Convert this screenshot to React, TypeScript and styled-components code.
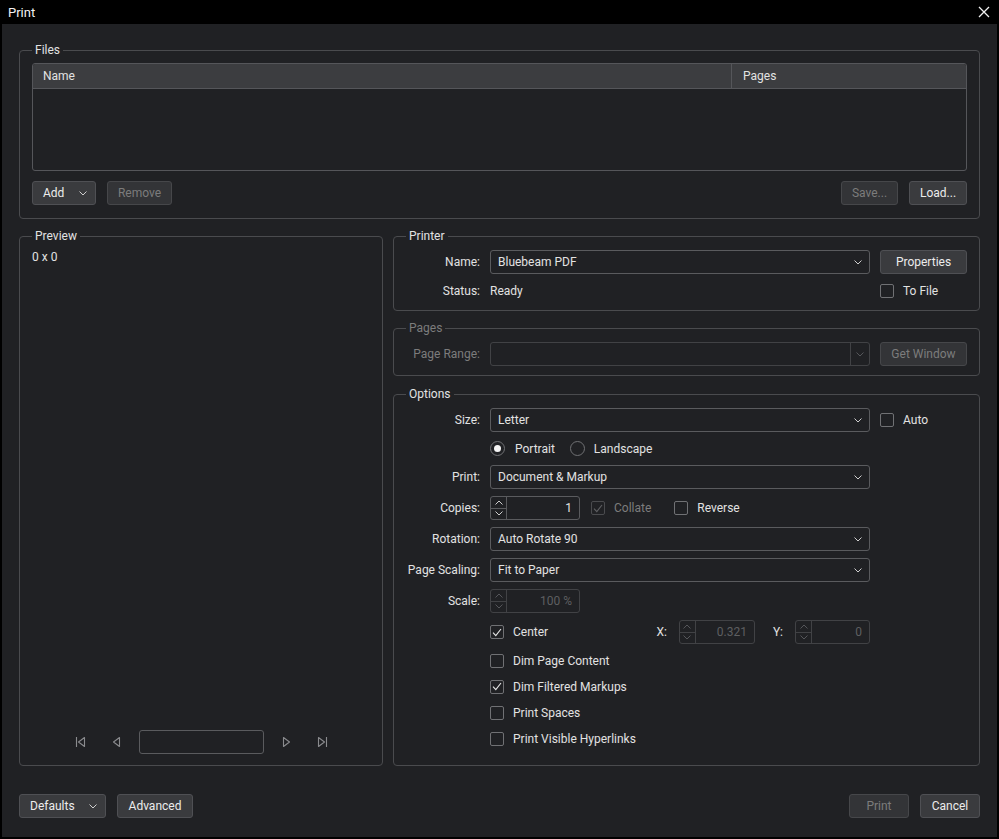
import React from 'react';
import styled, { createGlobalStyle } from 'styled-components';

const C = {
    bg: '#202124',
    frame: '#4a4b4e',
    field: '#5a5b5e',
    fieldOff: '#414245',
    btn: '#3a3b3e',
    btnBorder: '#4f5054',
    btnOff: '#333437',
    text: '#e2e2e2',
    textOff: '#7c7c7c',
    textDim: '#5e5f61',
};

const GlobalStyle = createGlobalStyle`
    html, body {
        margin: 0;
        padding: 0;
        background: #000;
    }
    body {
        font-family: Roboto, 'Liberation Sans', sans-serif;
        font-size: 12px;
        color: ${C.text};
    }
`;

const Chevron: React.FC<{ color?: string; up?: boolean }> = ({ color = '#cfcfcf', up }) => (
    <svg width="8" height="5" viewBox="0 0 8 5">
        <path d={up ? 'M0.5 4.5 L4 1 L7.5 4.5' : 'M0.5 0.5 L4 4 L7.5 0.5'} fill="none" stroke={color} strokeWidth="1" />
    </svg>
);

const Check: React.FC<{ color?: string }> = ({ color = '#e6e6e6' }) => (
    <svg width="10" height="9" viewBox="0 0 10 9">
        <path d="M1 4.6 L3.8 7.6 L9 1" fill="none" stroke={color} strokeWidth="1.1" />
    </svg>
);

const NavIcon: React.FC<{ kind: 'first' | 'prev' | 'next' | 'last' }> = ({ kind }) => {
    const left = kind === 'first' || kind === 'prev';
    const bar = kind === 'first' || kind === 'last';
    return (
        <svg width="12" height="12" viewBox="0 0 12 12">
            {left ? (
                <path d="M9.5 1.5 L3.5 6 L9.5 10.5 Z" fill="none" stroke="#8a8b8e" strokeWidth="1.1" strokeLinejoin="round" />
            ) : (
                <path d="M2.5 1.5 L8.5 6 L2.5 10.5 Z" fill="none" stroke="#8a8b8e" strokeWidth="1.1" strokeLinejoin="round" />
            )}
            {bar && <path d={left ? 'M1.5 1 V11' : 'M10.5 1 V11'} stroke="#8a8b8e" strokeWidth="1.1" />}
        </svg>
    );
};

const Window = styled.div`
    width: 999px;
    height: 839px;
    box-sizing: border-box;
    background: #000;
    padding: 0 2px 2px;
    display: flex;
    flex-direction: column;
`;

const TitleBar = styled.div`
    height: 24px;
    flex-shrink: 0;
    display: flex;
    align-items: center;
    justify-content: space-between;
    padding: 0 6px 0 6px;
    color: #f2f2f2;
    font-size: 13px;
`;

const CloseButton = styled.div`
    width: 14px;
    height: 14px;
    display: flex;
    align-items: center;
    justify-content: center;
`;

const Body = styled.div`
    flex: 1;
    min-height: 0;
    background: ${C.bg};
    padding: 19px 17px 19px 17px;
    display: flex;
    flex-direction: column;
`;

const Group = styled.fieldset<{ $pt?: number; $pb?: number }>`
    margin: 0;
    min-width: 0;
    border: 1px solid ${C.frame};
    border-radius: 4px;
    padding: ${(p) => p.$pt ?? 7}px 12px ${(p) => p.$pb ?? 11}px;
    display: flex;
    flex-direction: column;
`;

const Legend = styled.legend<{ $off?: boolean }>`
    padding: 0 3px;
    line-height: 14px;
    font-size: 12px;
    color: ${(p) => (p.$off ? C.textOff : C.text)};
`;

const Table = styled.div`
    height: 108px;
    box-sizing: border-box;
    border: 1px solid #55565a;
    border-radius: 3px;
    overflow: hidden;
`;

const TableHead = styled.div`
    height: 25px;
    box-sizing: border-box;
    display: grid;
    grid-template-columns: 698px 1fr;
    background: #3c3d40;
    border-bottom: 1px solid #55565a;
`;

const HeadCell = styled.div<{ $divider?: boolean }>`
    display: flex;
    align-items: center;
    padding-left: ${(p) => (p.$divider ? 11 : 10)}px;
    border-left: ${(p) => (p.$divider ? '1px solid #55565a' : 'none')};
    color: ${C.text};
`;

const ButtonRow = styled.div`
    display: flex;
    justify-content: space-between;
    align-items: center;
    margin-top: 10px;
`;

const ButtonGroup = styled.div`
    display: flex;
    gap: 11px;
`;

const Button = styled.div<{ $w: number; $off?: boolean; $menu?: boolean }>`
    width: ${(p) => p.$w}px;
    height: 24px;
    box-sizing: border-box;
    display: flex;
    align-items: center;
    justify-content: ${(p) => (p.$menu ? 'space-between' : 'center')};
    padding: ${(p) => (p.$menu ? '0 8px 0 10px' : '0')};
    background: ${(p) => (p.$off ? C.btnOff : C.btn)};
    border: 1px solid ${(p) => (p.$off ? '#46474a' : C.btnBorder)};
    border-radius: 3px;
    color: ${(p) => (p.$off ? C.textOff : '#ececec')};
    flex-shrink: 0;
`;

const Middle = styled.div`
    flex: 1;
    min-height: 0;
    display: flex;
    gap: 10px;
    margin-top: 10px;
`;

const PreviewGroup = styled(Group)`
    width: 364px;
    box-sizing: border-box;
    flex-shrink: 0;
`;

const PreviewText = styled.div`
    line-height: 14px;
`;

const Spacer = styled.div`
    flex: 1;
`;

const Nav = styled.div`
    display: flex;
    justify-content: center;
    align-items: center;
    gap: 11px;
`;

const NavButton = styled.div`
    width: 24px;
    height: 24px;
    display: flex;
    align-items: center;
    justify-content: center;
`;

const PageInput = styled.div`
    width: 125px;
    height: 24px;
    box-sizing: border-box;
    border: 1px solid ${C.field};
    border-radius: 3px;
`;

const RightColumn = styled.div`
    flex: 1;
    min-width: 0;
    display: flex;
    flex-direction: column;
    gap: 10px;
`;

const FormGrid = styled.div`
    display: grid;
    grid-template-columns: 74px 380px 87px;
    column-gap: 10px;
    row-gap: 7px;
`;

const Label = styled.div<{ $off?: boolean }>`
    grid-column: 1;
    text-align: right;
    align-self: center;
    white-space: nowrap;
    color: ${(p) => (p.$off ? C.textOff : C.text)};
`;

const Cell = styled.div<{ $h?: number }>`
    grid-column: 2;
    height: ${(p) => p.$h ?? 24}px;
    display: flex;
    align-items: center;
`;

const Side = styled.div`
    grid-column: 3;
    display: flex;
    align-items: center;
`;

const Combo = styled.div<{ $off?: boolean }>`
    width: 100%;
    height: 24px;
    box-sizing: border-box;
    display: flex;
    align-items: center;
    justify-content: space-between;
    padding: 0 7px 0 7px;
    border: 1px solid ${(p) => (p.$off ? C.fieldOff : C.field)};
    border-radius: 3px;
    color: ${C.text};
`;

const ComboSplit = styled.div`
    width: 100%;
    height: 24px;
    box-sizing: border-box;
    display: flex;
    border: 1px solid ${C.fieldOff};
    border-radius: 3px;
`;

const ComboArrow = styled.div`
    width: 18px;
    margin-left: auto;
    border-left: 1px solid ${C.fieldOff};
    display: flex;
    align-items: center;
    justify-content: center;
`;

const Spin = styled.div<{ $w: number; $off?: boolean }>`
    width: ${(p) => p.$w}px;
    height: 24px;
    box-sizing: border-box;
    display: flex;
    border: 1px solid ${(p) => (p.$off ? C.fieldOff : C.field)};
    border-radius: 3px;
    flex-shrink: 0;
`;

const SpinArrows = styled.div<{ $off?: boolean }>`
    width: 15px;
    display: flex;
    flex-direction: column;
    border-right: 1px solid ${(p) => (p.$off ? C.fieldOff : C.field)};
`;

const SpinHalf = styled.div<{ $top?: boolean; $off?: boolean }>`
    flex: 1;
    display: flex;
    align-items: center;
    justify-content: center;
    border-bottom: ${(p) => (p.$top ? `1px solid ${p.$off ? C.fieldOff : C.field}` : 'none')};
`;

const SpinValue = styled.div<{ $off?: boolean }>`
    flex: 1;
    display: flex;
    align-items: center;
    justify-content: flex-end;
    padding-right: 7px;
    color: ${(p) => (p.$off ? C.textDim : C.text)};
`;

const CheckRow = styled.div<{ $off?: boolean }>`
    display: flex;
    align-items: center;
    gap: 9px;
    color: ${(p) => (p.$off ? C.textOff : C.text)};
    white-space: nowrap;
`;

const Box = styled.div<{ $off?: boolean }>`
    width: 14px;
    height: 14px;
    box-sizing: border-box;
    border: 1px solid ${(p) => (p.$off ? '#4a4b4e' : '#707174')};
    border-radius: 2px;
    display: flex;
    align-items: center;
    justify-content: center;
    flex-shrink: 0;
`;

const Radio = styled.div<{ $on?: boolean }>`
    width: 15px;
    height: 15px;
    box-sizing: border-box;
    border: 1px solid #707174;
    border-radius: 50%;
    display: flex;
    align-items: center;
    justify-content: center;
    flex-shrink: 0;
    &::after {
        content: '';
        width: 7px;
        height: 7px;
        border-radius: 50%;
        background: ${(p) => (p.$on ? '#f4f4f4' : 'transparent')};
    }
`;

const Inline = styled.div<{ $gap: number }>`
    display: flex;
    align-items: center;
    gap: ${(p) => p.$gap}px;
`;

const CenterCell = styled(Cell)`
    justify-content: space-between;
`;

const Coord = styled.div`
    display: flex;
    align-items: center;
    gap: 12px;
`;

const Footer = styled.div`
    display: flex;
    justify-content: space-between;
    margin-top: 28px;
`;

const CheckBox: React.FC<{ label: string; checked?: boolean; off?: boolean }> = ({ label, checked, off }) => (
    <CheckRow $off={off}>
        <Box $off={off}>{checked && <Check color={off ? '#5f6063' : '#e6e6e6'} />}</Box>
        {label}
    </CheckRow>
);

const SpinBox: React.FC<{ w: number; value: string; off?: boolean }> = ({ w, value, off }) => {
    const arrow = off ? '#55565a' : '#cfcfcf';
    return (
        <Spin $w={w} $off={off}>
            <SpinArrows $off={off}>
                <SpinHalf $top $off={off}>
                    <Chevron up color={arrow} />
                </SpinHalf>
                <SpinHalf>
                    <Chevron color={arrow} />
                </SpinHalf>
            </SpinArrows>
            <SpinValue $off={off}>{value}</SpinValue>
        </Spin>
    );
};

const Select: React.FC<{ value: string }> = ({ value }) => (
    <Combo>
        {value}
        <Chevron />
    </Combo>
);

const App: React.FC = () => {
    return (
        <Window>
            <GlobalStyle />
            <TitleBar>
                Print
                <CloseButton>
                    <svg width="12" height="12" viewBox="0 0 12 12">
                        <path d="M1 1 L11 11 M11 1 L1 11" stroke="#f2f2f2" strokeWidth="1.3" />
                    </svg>
                </CloseButton>
            </TitleBar>
            <Body>
                <Group $pt={6} $pb={13}>
                    <Legend>Files</Legend>
                    <Table>
                        <TableHead>
                            <HeadCell>Name</HeadCell>
                            <HeadCell $divider>Pages</HeadCell>
                        </TableHead>
                    </Table>
                    <ButtonRow>
                        <ButtonGroup>
                            <Button $w={64} $menu>
                                Add
                                <Chevron />
                            </Button>
                            <Button $w={65} $off>
                                Remove
                            </Button>
                        </ButtonGroup>
                        <ButtonGroup>
                            <Button $w={57} $off>
                                Save...
                            </Button>
                            <Button $w={58}>Load...</Button>
                        </ButtonGroup>
                    </ButtonRow>
                </Group>

                <Middle>
                    <PreviewGroup $pt={7} $pb={11}>
                        <Legend>Preview</Legend>
                        <PreviewText>0 x 0</PreviewText>
                        <Spacer />
                        <Nav>
                            <NavButton>
                                <NavIcon kind="first" />
                            </NavButton>
                            <NavButton>
                                <NavIcon kind="prev" />
                            </NavButton>
                            <PageInput />
                            <NavButton>
                                <NavIcon kind="next" />
                            </NavButton>
                            <NavButton>
                                <NavIcon kind="last" />
                            </NavButton>
                        </Nav>
                    </PreviewGroup>

                    <RightColumn>
                        <Group $pt={7} $pb={10}>
                            <Legend>Printer</Legend>
                            <FormGrid>
                                <Label>Name:</Label>
                                <Cell>
                                    <Select value="Bluebeam PDF" />
                                </Cell>
                                <Side>
                                    <Button $w={87}>Properties</Button>
                                </Side>
                                <Label>Status:</Label>
                                <Cell $h={19}>Ready</Cell>
                                <Side>
                                    <CheckBox label="To File" />
                                </Side>
                            </FormGrid>
                        </Group>

                        <Group $pt={7} $pb={9}>
                            <Legend $off>Pages</Legend>
                            <FormGrid>
                                <Label $off>Page Range:</Label>
                                <Cell>
                                    <ComboSplit>
                                        <ComboArrow>
                                            <Chevron color="#55565a" />
                                        </ComboArrow>
                                    </ComboSplit>
                                </Cell>
                                <Side>
                                    <Button $w={87} $off>
                                        Get Window
                                    </Button>
                                </Side>
                            </FormGrid>
                        </Group>

                        <Group $pt={7} $pb={17} style={{ flex: 1, marginTop: 1 }}>
                            <Legend>Options</Legend>
                            <FormGrid>
                                <Label>Size:</Label>
                                <Cell>
                                    <Select value="Letter" />
                                </Cell>
                                <Side>
                                    <CheckBox label="Auto" />
                                </Side>

                                <Cell $h={19}>
                                    <Inline $gap={10}>
                                        <Radio $on />
                                        Portrait
                                    </Inline>
                                    <Inline $gap={9} style={{ marginLeft: 15 }}>
                                        <Radio />
                                        Landscape
                                    </Inline>
                                </Cell>

                                <Label>Print:</Label>
                                <Cell>
                                    <Select value="Document &amp; Markup" />
                                </Cell>

                                <Label>Copies:</Label>
                                <Cell>
                                    <SpinBox w={90} value="1" />
                                    <Inline $gap={23} style={{ marginLeft: 11 }}>
                                        <CheckBox label="Collate" checked off />
                                        <CheckBox label="Reverse" />
                                    </Inline>
                                </Cell>

                                <Label>Rotation:</Label>
                                <Cell>
                                    <Select value="Auto Rotate 90" />
                                </Cell>

                                <Label>Page Scaling:</Label>
                                <Cell>
                                    <Select value="Fit to Paper" />
                                </Cell>

                                <Label>Scale:</Label>
                                <Cell>
                                    <SpinBox w={90} value="100 %" off />
                                </Cell>

                                <CenterCell>
                                    <CheckBox label="Center" checked />
                                    <Inline $gap={18}>
                                        <Coord>
                                            X:
                                            <SpinBox w={76} value="0.321" off />
                                        </Coord>
                                        <Coord>
                                            Y:
                                            <SpinBox w={75} value="0" off />
                                        </Coord>
                                    </Inline>
                                </CenterCell>

                                <Cell $h={19}>
                                    <CheckBox label="Dim Page Content" />
                                </Cell>
                                <Cell $h={19}>
                                    <CheckBox label="Dim Filtered Markups" checked />
                                </Cell>
                                <Cell $h={19}>
                                    <CheckBox label="Print Spaces" />
                                </Cell>
                                <Cell $h={19}>
                                    <CheckBox label="Print Visible Hyperlinks" />
                                </Cell>
                            </FormGrid>
                        </Group>
                    </RightColumn>
                </Middle>

                <Footer>
                    <ButtonGroup>
                        <Button $w={87} $menu>
                            Defaults
                            <Chevron />
                        </Button>
                        <Button $w={76}>Advanced</Button>
                    </ButtonGroup>
                    <ButtonGroup>
                        <Button $w={60} $off>
                            Print
                        </Button>
                        <Button $w={60}>Cancel</Button>
                    </ButtonGroup>
                </Footer>
            </Body>
        </Window>
    );
};

export default App;
